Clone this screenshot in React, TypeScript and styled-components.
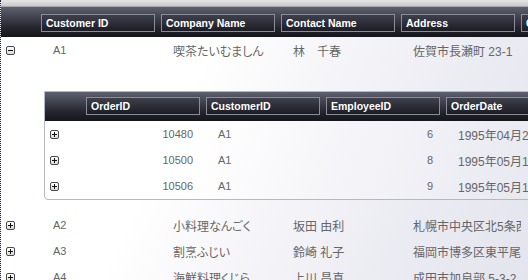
import React from 'react';
import styled, { createGlobalStyle, css } from 'styled-components';

const GlobalStyle = createGlobalStyle`
  html, body {
    margin: 0;
    padding: 0;
    background: #fff;
  }
  body {
    font-family: "Liberation Sans", "Noto Sans CJK JP", sans-serif;
  }
`;

const Page = styled.div`
  width: 528px;
  height: 280px;
  overflow: hidden;
  border-left: 1px dotted #2a2a2a;
  box-sizing: border-box;
  background: linear-gradient(115deg, #ffffff 35%, #ececf3 75%, #e4e4ee 100%);
`;

const TopStrip = styled.div`
  height: 7px;
  width: 640px;
  background: linear-gradient(#e6e6e6, #c9c9c9);
  border-bottom: 1px solid #a9a9ad;
  box-sizing: border-box;
`;

const cols = (lead: number) => css`
  display: grid;
  grid-template-columns: ${lead}px repeat(5, 120px);
`;

const HeaderBar = styled.div<{ $lead: number; $h: number; $top: number }>`
  ${(p) => cols(p.$lead)}
  height: ${(p) => p.$h}px;
  box-sizing: border-box;
  padding-top: ${(p) => p.$top}px;
  align-items: start;
  background: linear-gradient(#5d606e 0%, #40424e 35%, #24242d 70%, #15151b 100%);
`;

const HeadCell = styled.div`
  width: 114px;
  height: 18px;
  box-sizing: border-box;
  border: 1px solid #8a8c98;
  background: linear-gradient(#3e404c, #1c1c24);
  color: #fff;
  font-weight: bold;
  font-size: 10.5px;
  line-height: 16px;
  padding-left: 4px;
  white-space: nowrap;
  overflow: hidden;
`;

const Row = styled.div<{ $lead: number }>`
  ${(p) => cols(p.$lead)}
  height: 26px;
  align-items: center;
`;

const Cell = styled.div<{ $right?: boolean; $cjk?: boolean }>`
  padding: 0 ${(p) => (p.$right ? 13 : 14)}px 0 ${(p) => (p.$right ? 0 : 12)}px;
  text-align: ${(p) => (p.$right ? 'right' : 'left')};
  color: #666;
  font-size: ${(p) => (p.$cjk ? 12 : 11)}px;
  font-feature-settings: ${(p) => (p.$cjk ? '"palt"' : 'normal')};
  white-space: nowrap;
  overflow: hidden;
`;

const ExpCell = styled.div`
  display: flex;
  align-items: center;
  padding-left: 5px;
`;

const Expander = styled.span<{ $open?: boolean }>`
  position: relative;
  width: 9px;
  height: 9px;
  box-sizing: border-box;
  border: 1px solid #4a4a4a;
  border-radius: 2px;
  background: linear-gradient(#ffffff, #d9d9d9);

  &::before {
    content: '';
    position: absolute;
    left: 1px;
    top: 3px;
    width: 5px;
    height: 1px;
    background: #111;
  }

  &::after {
    content: '';
    display: ${(p) => (p.$open ? 'none' : 'block')};
    position: absolute;
    left: 3px;
    top: 1px;
    width: 1px;
    height: 5px;
    background: #111;
  }
`;

const Detail = styled.div`
  padding: 28px 0 12px 43px;
`;

const SubGrid = styled.div`
  width: 522px;
  box-sizing: border-box;
  border: 1px solid #b4b7cb;
  border-radius: 0 0 0 4px;
  background: linear-gradient(110deg, #ffffff 30%, #ededf4 80%, #e6e6ef 100%);
`;

const customers = [
  ['A1', '喫茶たいむましん', '林　千春', '佐賀市長瀬町 23-1', '佐賀市'],
  ['A2', '小料理なんごく', '坂田 由利', '札幌市中央区北5条西', '札幌市'],
  ['A3', '割烹ふじい', '鈴崎 礼子', '福岡市博多区東平尾', '福岡市'],
  ['A4', '海鮮料理くじら', '上川 昌真', '成田市加良部 5-3-2', '成田市'],
];

const orders = [
  ['10480', 'A1', '6', '1995年04月20日'],
  ['10500', 'A1', '8', '1995年05月10日'],
  ['10506', 'A1', '9', '1995年05月16日'],
];

const CustomerRow = ({ data, open }: { data: string[]; open?: boolean }) => (
  <Row $lead={40}>
    <ExpCell>
      <Expander $open={open} />
    </ExpCell>
    <Cell>{data[0]}</Cell>
    <Cell $cjk>{data[1]}</Cell>
    <Cell $cjk>{data[2]}</Cell>
    <Cell $cjk>{data[3]}</Cell>
    <Cell $cjk>{data[4]}</Cell>
  </Row>
);

const App = () => {
  const [first, ...rest] = customers;
  return (
    <>
      <GlobalStyle />
      <Page>
        <TopStrip />
        <HeaderBar $lead={40} $h={30} $top={7}>
          <span />
          <HeadCell>Customer ID</HeadCell>
          <HeadCell>Company Name</HeadCell>
          <HeadCell>Contact Name</HeadCell>
          <HeadCell>Address</HeadCell>
          <HeadCell>City</HeadCell>
        </HeaderBar>
        <CustomerRow data={first} open />
        <Detail>
          <SubGrid>
            <HeaderBar $lead={41} $h={29} $top={5}>
              <span />
              <HeadCell>OrderID</HeadCell>
              <HeadCell>CustomerID</HeadCell>
              <HeadCell>EmployeeID</HeadCell>
              <HeadCell>OrderDate</HeadCell>
            </HeaderBar>
            {orders.map((o) => (
              <Row $lead={41} key={o[0]}>
                <ExpCell>
                  <Expander />
                </ExpCell>
                <Cell $right>{o[0]}</Cell>
                <Cell>{o[1]}</Cell>
                <Cell $right>{o[2]}</Cell>
                <Cell $cjk>{o[3]}</Cell>
              </Row>
            ))}
          </SubGrid>
        </Detail>
        {rest.map((c) => (
          <CustomerRow data={c} key={c[0]} />
        ))}
      </Page>
    </>
  );
};

export default App;
